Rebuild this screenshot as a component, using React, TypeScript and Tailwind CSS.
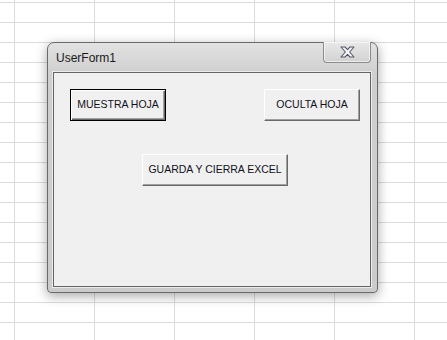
import React from 'react'

function CloseGlyph() {
  return (
    <svg width="15" height="12" viewBox="0 0 15 12">
      <path
        d="M1 1 L5 1 L7.5 3.6 L10 1 L14 1 L9.6 6 L14 11 L10 11 L7.5 8.4 L5 11 L1 11 L5.4 6 Z"
        fill="#f6f6f8"
        stroke="#55586a"
        strokeWidth="1.1"
        strokeLinejoin="round"
      />
    </svg>
  )
}

function FormButton({ label, focused, className }: { label: string; focused?: boolean; className?: string }) {
  return (
    <button
      className={
        'h-[32px] bg-[#f0f0f0] text-[10.5px] text-[#101020] flex items-center justify-center ' +
        (focused
          ? 'border border-black shadow-[inset_1px_1px_0_#ffffff,inset_-1px_-1px_0_#696969,inset_-2px_-2px_0_#a0a0a0] '
          : 'border border-t-white border-l-white border-b-[#696969] border-r-[#696969] shadow-[inset_-1px_-1px_0_#a0a0a0] ') +
        (className || '')
      }
      style={{ fontFamily: '"Liberation Sans", Arial, sans-serif' }}
    >
      {label}
    </button>
  )
}

export default function App() {
  return (
    <div
      className="relative w-[447px] h-[340px] overflow-hidden bg-white bg-[linear-gradient(to_right,#dadcdd_1px,transparent_1px),linear-gradient(to_bottom,#dadcdd_1px,transparent_1px)] bg-[length:80px_20px] bg-[position:14px_2px]"
      style={{ fontFamily: '"Liberation Sans", Arial, sans-serif' }}
    >
      {/* UserForm window */}
      <div className="absolute left-[47px] top-[42px] w-[331px] h-[251px] flex flex-col rounded-t-[7px] rounded-b-[4px] border border-[#6a6a6a] bg-[linear-gradient(to_bottom,#e2e2e2,#cfcfcf_30px,#cbcbcb)] shadow-[0_3px_12px_rgba(0,0,0,0.35)]">
        {/* Title bar */}
        <div className="relative h-[29px] flex items-center pl-[8px]">
          <span className="text-[12px] text-[#1a1a1a]">UserForm1</span>
          <div className="absolute right-[6px] -top-px w-[48px] h-[21px] rounded-b-[4px] border border-[#8c8c8c] border-t-0 bg-[linear-gradient(to_bottom,#e8e8e8,#d2d2d2)] shadow-[inset_0_0_0_1px_rgba(255,255,255,0.6)] flex items-center justify-center">
            <CloseGlyph />
          </div>
        </div>

        {/* Client area */}
        <div className="flex-1 ml-[5px] mr-[6px] mb-[5px] border border-[#646464] shadow-[0_0_0_1px_#ececec] bg-[#f0f0f0]">
          <div className="flex justify-between pl-[16px] pr-[10px] pt-[16px]">
            <FormButton label="MUESTRA HOJA" focused className="w-[96px]" />
            <FormButton label="OCULTA HOJA" className="w-[96px]" />
          </div>
          <div className="pl-[88px] pt-[33px]">
            <FormButton label="GUARDA Y CIERRA EXCEL" className="w-[146px]" />
          </div>
        </div>
      </div>
    </div>
  )
}
